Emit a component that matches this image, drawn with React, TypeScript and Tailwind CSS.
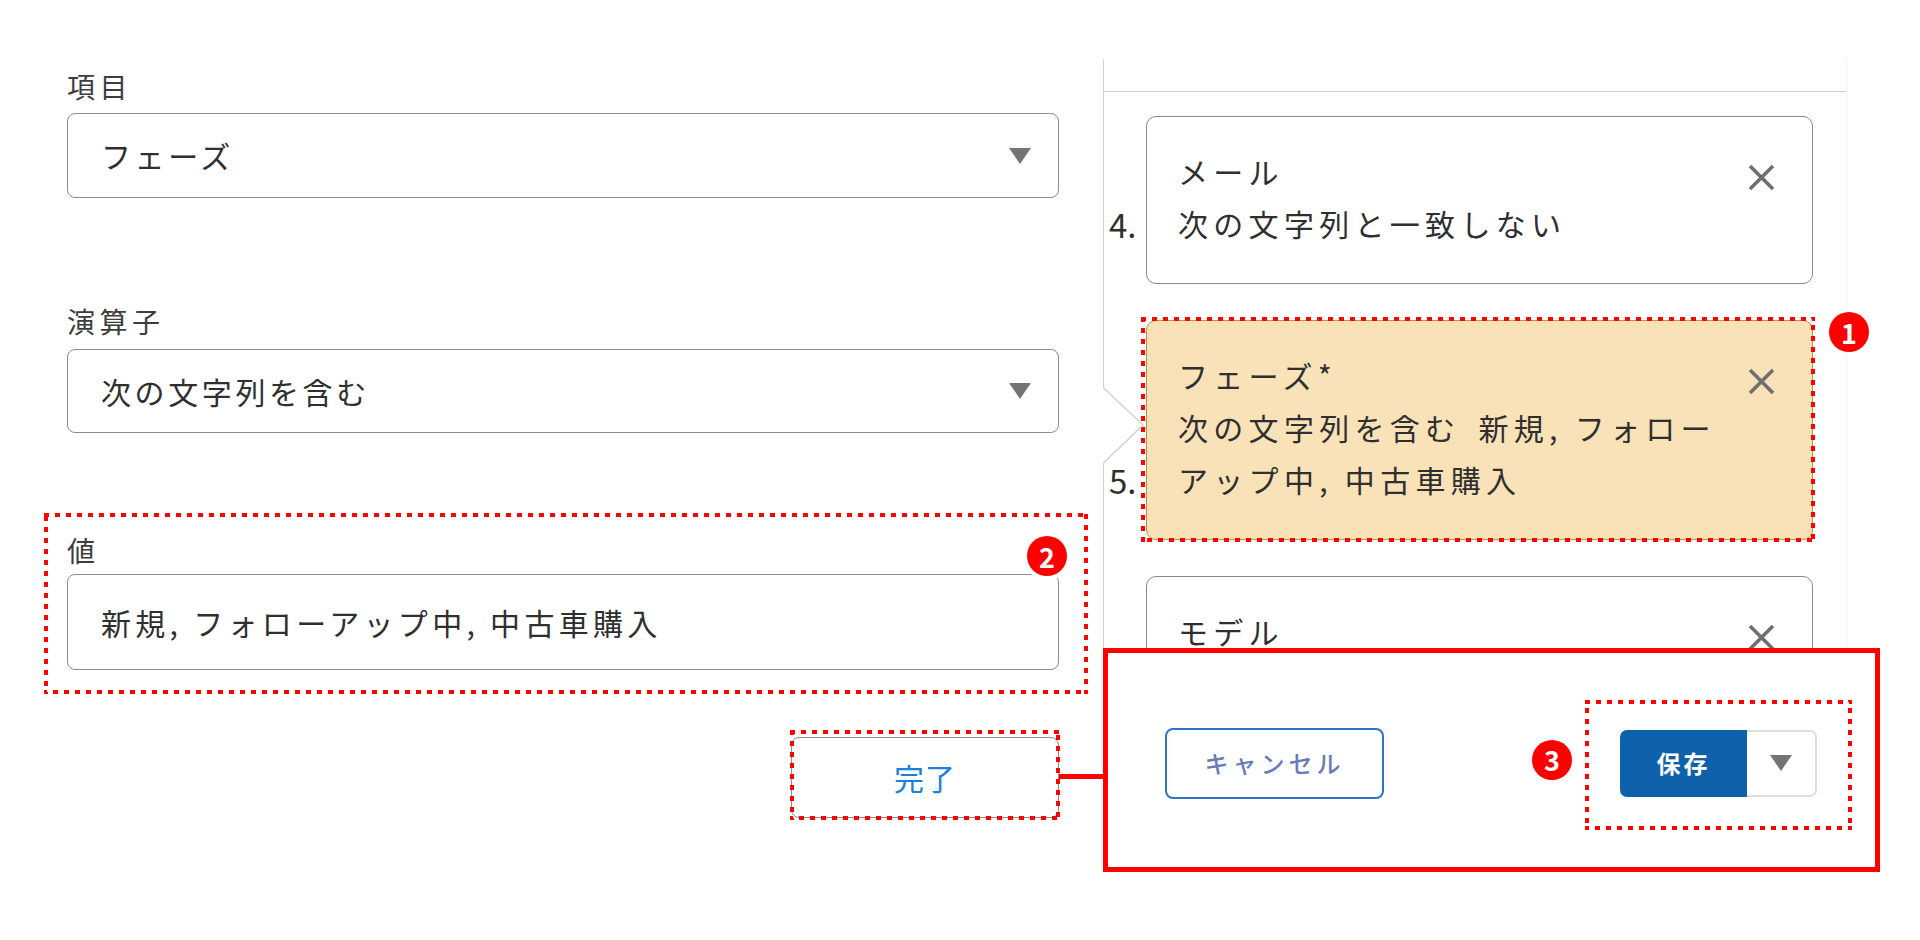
const RED = '#ff0000';

function Dotted({ className }: { className: string }) {
  // red dotted annotation frame
  return (
    <svg className={`pointer-events-none absolute ${className}`} width="100%" height="100%">
      <rect x="0" y="0" width="100%" height="100%" fill="none" stroke={RED} strokeWidth="8" strokeDasharray="5 6" />
    </svg>
  );
}

function Badge({ n, className }: { n: number; className: string }) {
  return (
    <div
      className={`absolute flex h-[40px] w-[40px] items-center justify-center rounded-full bg-[#ff0000] text-[27px] font-bold leading-none text-white ring-4 ring-white ${className}`}
    >
      {n}
    </div>
  );
}

function Caret({ className = '' }: { className?: string }) {
  return (
    <svg className={className} width="22" height="16" viewBox="0 0 22 16">
      <polygon points="0,0 22,0 11,16" fill="#747474" />
    </svg>
  );
}

function CloseX() {
  return (
    <svg className="mt-[19px] shrink-0" width="27" height="27" viewBox="0 0 27 27">
      <path d="M2 2 L25 25 M25 2 L2 25" stroke="#6f6f6f" strokeWidth="3.6" />
    </svg>
  );
}

function Select({ value, h }: { value: string; h: string }) {
  return (
    <div
      className={`flex ${h} items-center justify-between rounded-[8px] border-[1.5px] border-[#8d8d8d] pl-[33px] pr-[27px] text-[30px] tracking-[3.6px] text-[#2f2f2f]`}
    >
      <span>{value}</span>
      <Caret />
    </div>
  );
}

type Rule = { no: number; field: string; lines: string[]; active?: boolean };

const RULES: Rule[] = [
  { no: 4, field: 'メール', lines: ['次の文字列と一致しない'] },
  { no: 5, field: 'フェーズ*', lines: ['次の文字列を含む', '新規, フォローアップ中, 中古車購入'], active: true },
  { no: 6, field: 'モデル', lines: ['次の文字列と一致する', 'カローラ'] },
];

function RuleCard({ rule }: { rule: Rule }) {
  return (
    <div className="flex items-end">
      <div className="w-[42px] shrink-0 pb-[34px] pl-[5px] text-[33px] leading-[52px] text-[#2f2f2f]">{rule.no}.</div>
      <div className="relative">
        <div
          className={`flex w-[667px] items-start justify-between rounded-[10px] pb-[34px] pl-[31px] pr-[37px] pt-[28px] ${
            rule.active ? 'border-[1.5px] border-[#c1913f] bg-[#f9e2b8]' : 'border-[1.5px] border-[#8a8a8a] bg-white'
          }`}
        >
          <div className="w-[544px] text-[30px] leading-[52px] tracking-[5.3px] text-[#2f2f2f]">
            <div>{rule.field}</div>
            <div>
              {rule.lines[0]}
              {rule.lines[1] && <span className="ml-[18px]">{rule.lines[1]}</span>}
            </div>
          </div>
          <CloseX />
        </div>
        {rule.active && (
          <>
            <Dotted className="left-[-5px] top-[-3px] h-[calc(100%+5px)] w-[calc(100%+7px)]" />
            <Badge n={1} className="left-[683px] top-[-8px]" />
          </>
        )}
      </div>
    </div>
  );
}

export default function App() {
  return (
    <div className="relative flex h-[940px] w-[1920px] items-start overflow-hidden bg-white font-['Noto_Sans_CJK_JP','Noto_Sans',sans-serif]">
      {/* left: filter editor */}
      <div className="ml-[67px] w-[992px] pt-[68px]">
        <div className="mb-[9px] text-[28px] leading-[36px] tracking-[4.5px] text-[#3d3d3d]">項目</div>
        <Select value="フェーズ" h="h-[85px]" />

        <div className="mb-[10px] mt-[105px] text-[28px] leading-[36px] tracking-[4.5px] text-[#3d3d3d]">演算子</div>
        <Select value="次の文字列を含む" h="h-[84px]" />

        <div className="relative mt-[99px]">
          <div className="mb-[6px] text-[28px] leading-[36px] tracking-[4.5px] text-[#3d3d3d]">値</div>
          <div className="flex h-[96px] items-center rounded-[8px] border-[1.5px] border-[#8d8d8d] pl-[33px] text-[30px] tracking-[4.3px] text-[#2f2f2f]">
            新規, フォローアップ中, 中古車購入
          </div>
          <Dotted className="left-[-23px] top-[-19px] h-[calc(100%+43px)] w-[calc(100%+52px)]" />
          <Badge n={2} className="left-[960px] top-[4px]" />
        </div>

        <div className="mt-[67px] flex justify-end">
          <div className="relative">
            <button className="flex h-[81px] w-[268px] items-center justify-center rounded-[8px] border-[1.5px] border-[#8d8d8d] bg-white text-[30px] tracking-[1px] text-[#1b80d8]">
              完了
            </button>
            <Dotted className="left-[-1px] top-[-7px] h-[calc(100%+9px)] w-[calc(100%+2px)]" />
            <div className="absolute left-full top-[37px] h-[5px] w-[46px] bg-[#ff0000]" />
          </div>
        </div>
      </div>

      {/* right: filter list + footer */}
      <div className="ml-[44px] mt-[59px] w-[777px]">
        <div className="relative h-[589px] w-[744px] overflow-x-visible overflow-y-clip border-l border-r border-l-[#d2d2d2] border-r-[#f3f3f3]">
          <div className="h-[33px] border-b-[1.5px] border-[#d0d0d0]" />
          <div className="flex flex-col gap-[36px] pt-[24px]">
            {RULES.map((r) => (
              <RuleCard key={r.no} rule={r} />
            ))}
          </div>
          <svg className="absolute left-[-1px] top-[329px]" width="44" height="76" viewBox="0 0 44 76">
            <polygon points="0,0 40,37 0,75" fill="white" />
            <polyline points="0.5,0 40,37 0.5,75" fill="none" stroke="#d2d2d2" strokeWidth="1.5" />
          </svg>
        </div>

        <div className="flex h-[224px] items-center justify-between border-[5px] border-[#ff0000] bg-white pl-[57px] pr-[58px] pt-[6px]">
          <button className="flex h-[71px] w-[219px] items-center justify-center rounded-[8px] border-2 border-[#2e74c1] bg-white text-[24px] font-medium tracking-[4px] text-[#6a7cba]">
            キャンセル
          </button>
          <div className="relative flex">
            <button className="flex h-[67px] w-[127px] items-center justify-center rounded-l-[7px] bg-[#0f61ac] text-[24px] font-bold tracking-[3px] text-white">
              保存
            </button>
            <div className="flex h-[67px] w-[70px] items-center justify-center rounded-r-[7px] border-2 border-l-0 border-[#dedede] bg-white">
              <Caret />
            </div>
            <Dotted className="left-[-35px] top-[-30px] h-[calc(100%+63px)] w-[calc(100%+70px)]" />
            <Badge n={3} className="left-[-88px] top-[10px]" />
          </div>
        </div>
      </div>
    </div>
  );
}
